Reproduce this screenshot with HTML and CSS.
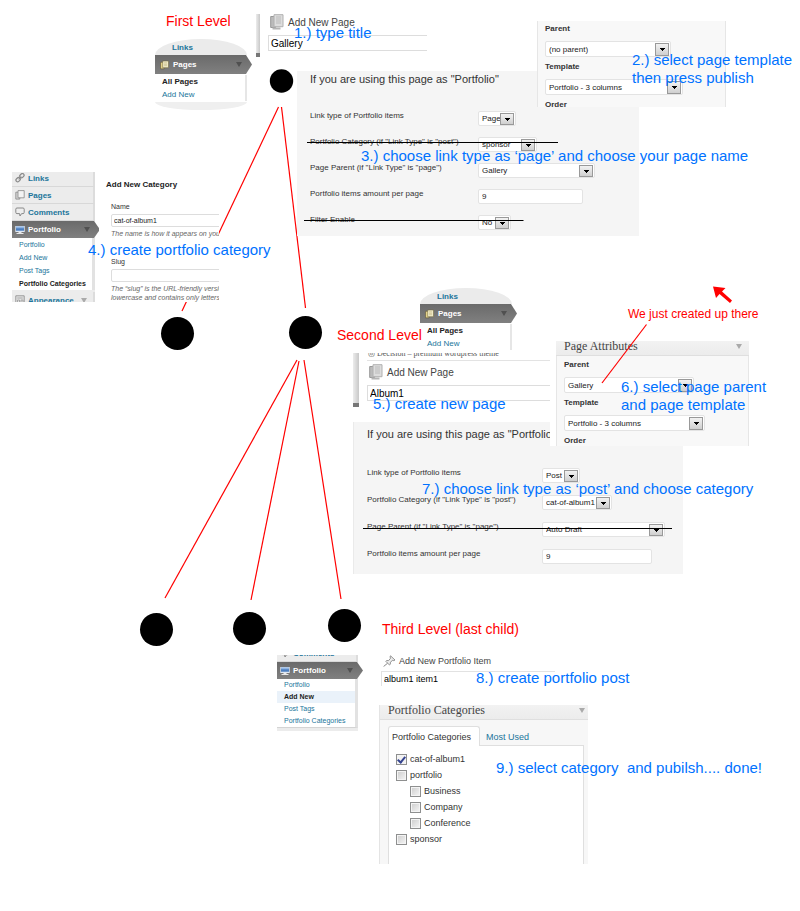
FILE: index.html
```html
<!DOCTYPE html>
<html lang="en">
<head>
<meta charset="utf-8">
<title>Portfolio levels guide</title>
<link rel="stylesheet" href="styles.css">
</head>
<body>
<svg class="defs" width="0" height="0" aria-hidden="true">
  <symbol id="i-link" viewBox="0 0 10 10"><g fill="none" stroke="#8a8a8a" stroke-width="1.2"><rect x="4.6" y="1" width="4.6" height="3.4" rx="1.6" transform="rotate(-45 6.9 2.7)"/><rect x=".8" y="5" width="4.6" height="3.4" rx="1.6" transform="rotate(-45 3.1 6.7)"/><path d="M3.6 6.4 6.4 3.6"/></g></symbol>
  <symbol id="i-pages" viewBox="0 0 10 10"><path d="M.8 2.2h4v6.9h-4z" fill="#d5d5d5" stroke="#888" stroke-width=".8"/><path d="M3 .6h6.2v7.2H3z" fill="#f3f3f3" stroke="#888" stroke-width=".8"/></symbol>
  <symbol id="i-pages-on" viewBox="0 0 10 10"><path d="M.6 2h4v7.3h-4z" fill="#e6d48c" stroke="#554d30" stroke-width=".6"/><path d="M3 .6h6.4v7.4H3z" fill="#f4eecb" stroke="#6d6238" stroke-width=".6"/><path d="M4.5 2.6h3.3M4.5 4.2h3.3M4.5 5.8h3.3" stroke="#b5a770" stroke-width=".6"/></symbol>
  <symbol id="i-comment" viewBox="0 0 10 10"><path d="M2 1h6q1.2 0 1.2 1.2v3.2q0 1.2-1.2 1.2H6.6L5 9 4.6 6.6H2Q.8 6.6.8 5.400V2.200Q.8 1 2 1z" fill="#eee" stroke="#888" stroke-width="1"/></symbol>
  <symbol id="i-screen" viewBox="0 0 10 10"><path d="M.3 1h9.4v6H.3z" fill="#dfe8f3"/><path d="M1 1.700h8v4H1z" fill="#4c7fc0"/><path d="M1 1.700h8v1.600H1z" fill="#8fb4e2"/><path d="M3.500 7h3v1h2v1h-7V8h2z" fill="#e8e8e8"/></symbol>
  <symbol id="i-theme" viewBox="0 0 10 10"><path d="M.8.8h8.400v8.400H.8z" fill="#e4e4e4" stroke="#999"/><path d="M2.300 3h5.400M2.500 5h2v3h-2zM6 5h2v3H6z" fill="none" stroke="#999" stroke-width=".8"/></symbol>
  <symbol id="i-bigpages" viewBox="0 0 14 16"><path d="M.7 2.500h5v11h-5z" fill="#bbb" stroke="#999"/><path d="M2.500 14.500h8" stroke="#b5b5b5" stroke-width="2"/><path d="M4 .7h9v12H4z" fill="#ddd" stroke="#b0b0b0"/><path d="M6 3h5M6 5h5M6 7h5M6 9h5" stroke="#bbb"/></symbol>
  <symbol id="i-pin" viewBox="0 0 13 12"><path d="M7.500.8 12 5 10.800 5.700 9.800 5.200 7.400 7.200 7.300 9.300 6.500 10 2.800 6.300 3.600 5.500 5.600 5.600 7.600 3.200 7 2z" fill="#eee" stroke="#888" stroke-width=".9"/><path d="M4.600 8.200.6 11.500" stroke="#888"/></symbol>
</svg>

<main class="canvas">
  <svg class="layer" aria-hidden="true">
    <g stroke="#f00" stroke-width="1.200">
      <path d="M278.500 107 182 311"/><path d="M281.500 107 305.500 308"/>
      <path d="M297 360 165 598"/><path d="M299 361 251 600"/><path d="M304 360 341 599"/>
    </g>
    <circle cx="281.500" cy="81" r="11.700"/>
    <circle cx="177.500" cy="333.500" r="16.500"/><circle cx="305.500" cy="332.500" r="16.500"/>
    <circle cx="156.500" cy="629.500" r="16.500"/><circle cx="249.500" cy="628.500" r="16.500"/><circle cx="344.500" cy="625.500" r="16.500"/>
  </svg>

  <section class="clip titlebox at-title-1">
    <div class="rail"></div>
    <div class="titlebody">
      <h2 class="pagehead"><svg width="14" height="16"><use href="#i-bigpages"/></svg>Add New Page</h2>
      <input class="titleinput" aria-label="Page title" value="Gallery">
    </div>
  </section>

  <nav class="clip lens at-lens-1">
    <a class="lens-top" href="#">Links</a>
    <a class="bar" href="#"><svg width="9" height="10"><use href="#i-pages-on"/></svg><span>Pages</span><i class="tri"></i></a>
    <div class="lens-sub"><a class="current" href="#">All Pages</a><a href="#">Add New</a><div class="lens-foot"></div></div>
  </nav>

  <section class="clip options at-options-1">
    <h3>If you are using this page as "Portfolio"</h3>
    <div class="fields">
      <label for="a1">Link type of Portfolio items</label><span class="pick w38"><select id="a1"><option>Page</option></select></span>
      <label for="a2">Portfolio Category (if "Link Type" is "post")</label><span class="pick w59"><select id="a2"><option>sponsor</option></select></span>
      <label for="a3">Page Parent (if "Link Type" is "page")</label><span class="pick w117"><select id="a3"><option>Gallery</option></select></span>
      <label for="a4">Portfolio items amount per page</label><input id="a4" class="amount" value="9">
      <label for="a5">Filter Enable</label><span class="pick w33"><select id="a5"><option>No</option></select></span>
    </div>
  </section>

  <section class="clip attrs at-attrs-1">
    <div class="attrs-body">
      <label for="b1">Parent</label><span class="pick tall w126"><select id="b1"><option>(no parent)</option></select></span>
      <label for="b2">Template</label><span class="pick tall w138"><select id="b2"><option>Portfolio - 3 columns</option></select></span>
      <b>Order</b>
    </div>
  </section>

  <nav class="clip menu at-menu-1">
    <a class="item" href="#"><svg width="10" height="10"><use href="#i-link"/></svg><span>Links</span></a>
    <a class="item" href="#"><svg width="10" height="10"><use href="#i-pages"/></svg><span>Pages</span></a>
    <a class="item" href="#"><svg width="10" height="10"><use href="#i-comment"/></svg><span>Comments</span></a>
    <a class="bar" href="#"><svg width="10" height="10"><use href="#i-screen"/></svg><span>Portfolio</span><i class="tri"></i></a>
    <div class="sub"><a href="#">Portfolio</a><a href="#">Add New</a><a href="#">Post Tags</a><a class="current" href="#">Portfolio Categories</a></div>
    <a class="item" href="#"><svg width="10" height="10"><use href="#i-theme"/></svg><span>Appearance</span><i class="tri"></i></a>
  </nav>

  <section class="clip catform at-catform">
    <h3>Add New Category</h3>
    <div class="catfield"><label for="c1">Name</label><input id="c1" value="cat-of-album1"><p>The name is how it appears on your site.</p></div>
    <div class="catfield"><label for="c2">Slug</label><input id="c2"><p>The “slug” is the URL-friendly version<br>lowercase and contains only letters, numbers</p></div>
  </section>

  <section class="clip titlebox second at-title-2">
    <div class="rail"></div>
    <div class="titlebody">
      <p class="sitename"><span>◎</span> Decision – premium wordpress theme</p>
      <h2 class="pagehead"><svg width="14" height="16"><use href="#i-bigpages"/></svg>Add New Page</h2>
      <input class="titleinput" aria-label="Page title" value="Album1">
    </div>
  </section>

  <nav class="clip lens short at-lens-2">
    <a class="lens-top" href="#">Links</a>
    <a class="bar" href="#"><svg width="9" height="10"><use href="#i-pages-on"/></svg><span>Pages</span><i class="tri"></i></a>
    <div class="lens-sub"><a class="current" href="#">All Pages</a><a href="#">Add New</a></div>
  </nav>

  <section class="clip options wide at-options-2">
    <h3>If you are using this page as "Portfolio"</h3>
    <div class="fields">
      <label for="d1">Link type of Portfolio items</label><span class="pick w38"><select id="d1"><option>Post</option></select></span>
      <label for="d2">Portfolio Category (if "Link Type" is "post")</label><span class="pick w70"><select id="d2"><option>cat-of-album1</option></select></span>
      <label for="d3">Page Parent (if "Link Type" is "page")</label><span class="pick w123"><select id="d3"><option>Auto Draft</option></select></span>
      <label for="d4">Portfolio items amount per page</label><input id="d4" class="amount" value="9">
    </div>
  </section>

  <section class="clip attrs gap at-attrs-2">
    <h3 class="boxhead">Page Attributes<i class="tri"></i></h3>
    <div class="attrs-body">
      <label for="e1">Parent</label><span class="pick tall w130"><select id="e1"><option>Gallery</option></select></span>
      <label for="e2">Template</label><span class="pick tall w141"><select id="e2"><option>Portfolio - 3 columns</option></select></span>
      <b>Order</b>
    </div>
  </section>

  <nav class="clip menu tight at-menu-2">
    <a class="item" href="#"><svg width="10" height="10"><use href="#i-comment"/></svg><span>Comments</span></a>
    <a class="bar" href="#"><svg width="10" height="10"><use href="#i-screen"/></svg><span>Portfolio</span><i class="tri"></i></a>
    <div class="sub"><a href="#">Portfolio</a><a class="current lit" href="#">Add New</a><a href="#">Post Tags</a><a href="#">Portfolio Categories</a></div>
  </nav>

  <section class="clip itembox at-item">
    <h2><svg width="13" height="12"><use href="#i-pin"/></svg>Add New Portfolio Item</h2>
    <input aria-label="Item title" value="album1 item1">
  </section>

  <section class="clip catbox at-catbox">
    <h3 class="boxhead">Portfolio Categories<i class="tri"></i></h3>
    <div class="tabs"><button class="tab on">Portfolio Categories</button><button class="tab">Most Used</button></div>
    <div class="checks">
      <label><input type="checkbox" checked>cat-of-album1</label>
      <label><input type="checkbox">portfolio</label>
      <label class="child"><input type="checkbox">Business</label>
      <label class="child"><input type="checkbox">Company</label>
      <label class="child"><input type="checkbox">Conference</label>
      <label><input type="checkbox">sponsor</label>
    </div>
  </section>

  <svg class="layer" aria-hidden="true">
    <path d="M307 142.500H558M304 220.500H523.500M363 528.500H672" stroke="#000"/>
    <path d="M646.500 324.500 602 383" stroke="#f00" stroke-width="1.200"/>
    <path d="M713 286.500 725.500 288 722 291.500 732 300.500 730 303 719.500 294 716 298z" fill="#f00"/>
  </svg>

  <p class="level at-l1">First Level</p>
  <p class="level at-l2">Second Level</p>
  <p class="level at-l3">Third Level (last child)</p>
  <p class="remark at-remark">We just created up there</p>
  <p class="step at-s1">1.) type title</p>
  <p class="step at-s2">2.) select page template<br>then press publish</p>
  <p class="step at-s3">3.) choose link type as ‘page’ and choose your page name</p>
  <p class="step at-s4">4.) create portfolio category</p>
  <p class="step at-s5">5.) create new page</p>
  <p class="step at-s6">6.) select page parent<br>and page template</p>
  <p class="step at-s7">7.) choose link type as ‘post’ and choose category</p>
  <p class="step at-s8">8.) create portfolio post</p>
  <p class="step at-s9">9.) select category  and pubilsh.... done!</p>
</main>
</body>
</html>
```
FILE: styles.css
```css
* { box-sizing: border-box; }
body { margin: 0; background: #fff; color: #333; font-family: "Liberation Sans", Arial, sans-serif; font-size: 8px; }
h2, h3, p { margin: 0; font-weight: normal; }
a { color: #21759b; text-decoration: none; }
input, select, button { margin: 0; font: inherit; color: #222; outline: 0; }
svg { flex: none; display: block; }
.defs { position: absolute; }

/* Free canvas: clippings, nodes and notes are pinned on it */
.canvas { position: relative; min-height: 880px; overflow: hidden; }
.layer { position: absolute; left: 0; top: 0; width: 100%; height: 100%; pointer-events: none; }
.clip, .level, .step, .remark { position: absolute; }

.level { font-size: 14px; line-height: 18px; color: #f00; white-space: nowrap; }
.step { font-size: 15px; line-height: 18px; color: #0072ff; white-space: pre; }
.remark { font-size: 12px; line-height: 16px; color: #f00; white-space: nowrap; }

.at-title-1 { left: 256px; top: 14px; width: 171px; height: 43px; }
.at-lens-1 { left: 155px; top: 39px; }
.at-options-1 { left: 297px; top: 71px; width: 342px; height: 165px; }
.at-attrs-1 { left: 537px; top: 21px; width: 189px; height: 86px; }
.at-menu-1 { left: 12px; top: 172px; height: 130px; }
.at-catform { left: 99px; top: 172px; width: 120px; height: 130px; }
.at-title-2 { left: 353px; top: 353px; width: 197px; height: 54px; }
.at-lens-2 { left: 420px; top: 288px; }
.at-options-2 { left: 353px; top: 422px; width: 330px; height: 152px; }
.at-attrs-2 { left: 550px; top: 341px; width: 199px; height: 105px; }
.at-menu-2 { left: 277px; top: 655px; height: 76px; }
.at-item { left: 381px; top: 654px; width: 174px; }
.at-catbox { left: 379px; top: 705px; width: 209px; height: 159px; }
.at-l1 { left: 166px; top: 12px; }
.at-l2 { left: 337px; top: 326px; }
.at-l3 { left: 382px; top: 620px; }
.at-remark { left: 628px; top: 306px; }
.at-s1 { left: 294px; top: 24px; }
.at-s2 { left: 632px; top: 51px; }
.at-s3 { left: 361px; top: 147px; }
.at-s4 { left: 88px; top: 241px; }
.at-s5 { left: 373px; top: 395px; }
.at-s6 { left: 621px; top: 378px; }
.at-s7 { left: 422px; top: 480px; }
.at-s8 { left: 476px; top: 669px; }
.at-s9 { left: 496px; top: 759px; }

.tri { width: 0; height: 0; margin-left: auto; border: 3px solid transparent; border-top: 5px solid #aaa; border-bottom: 0; }

/* Drop-downs */
.pick { position: relative; display: flex; height: 15px; }
.pick.tall { height: 16px; }
.pick select { appearance: none; width: 100%; padding: 0 3px; border: 1px solid #e3e3e3; border-radius: 2px; background: #fff; font-size: 8px; color: #222; }
.pick::after { content: ""; position: absolute; right: 2px; top: 2px; bottom: 1px; width: 12px; border: 1px solid #999; background: linear-gradient(#000, #000) center 4px / 5px 1px no-repeat, linear-gradient(#000, #000) center 5px / 3px 1px no-repeat, linear-gradient(#000, #000) center 6px / 1px 1px no-repeat, linear-gradient(#f2f2f2, #cfcfcf); }
.w33 { width: 33px; } .w38 { width: 38px; } .w59 { width: 59px; } .w70 { width: 70px; }
.w117 { width: 117px; } .w123 { width: 123px; } .w126 { width: 126px; } .w130 { width: 130px; }
.w138 { width: 138px; } .w141 { width: 141px; }
.amount { width: 105px; height: 15px; padding: 0 3px; border: 1px solid #e3e3e3; border-radius: 2px; background: #fff; }

/* Title clippings */
.titlebox { display: flex; background: #fff; overflow: hidden; }
.rail { width: 4px; margin-right: 8px; background: linear-gradient(90deg, #ececec, #c8c8c8); border-bottom: 4px solid #777; }
.titlebody { flex: 1; display: flex; flex-direction: column; }
.pagehead { display: flex; align-items: center; gap: 4px; height: 16px; padding-left: 2px; font-size: 10px; color: #444; }
.titleinput { width: 100%; height: 16px; margin-top: 5px; padding: 0 2px; border: 1px solid #ddd; border-right: 0; background: #fff; font-size: 10px; color: #000; }
.second .rail { width: 6px; }
.sitename { height: 8px; margin-bottom: 3px; padding-left: 1px; border-bottom: 1px solid #e3e3e3; font: 8px/1px "Liberation Serif", serif; color: #555; white-space: nowrap; }

/* Rounded menu clippings */
.lens { width: 92px; }
.lens-top { display: flex; align-items: center; height: 16px; padding-left: 17px; border-radius: 50% 50% 0 0 / 100% 100% 0 0; background: #ebebeb; overflow: hidden; font-weight: bold; }
.bar { display: flex; align-items: center; gap: 7px; height: 19px; margin-right: -5px; padding: 0 10px 0 5px; background: linear-gradient(#6a6a6a, #808080); clip-path: polygon(0 0, calc(100% - 6px) 0, 100% 50%, calc(100% - 6px) 100%, 0 100%); color: #fff; font-weight: bold; }
.bar .tri { border-top-color: #505050; }
.lens .bar { gap: 4px; }
.lens-sub { display: flex; flex-direction: column; height: 36px; padding-top: 1px; line-height: 13px; }
.lens-sub a { padding-left: 7px; border-right: 2px solid #e6e6e6; }
.lens-foot { flex: 1; margin-top: 1px; border-radius: 0 0 50% 50% / 0 0 100% 100%; background: #efefef; }
.short .lens-sub { height: 30px; }
.current { color: #222; font-weight: bold; }

/* Option panels */
.options { background: #f5f5f5; padding-left: 13px; }
.options h3 { height: 40px; font-size: 11px; line-height: 17px; }
.fields { display: grid; grid-template-columns: 168px 1fr; grid-auto-rows: 15px; row-gap: 11px; }
.fields label { line-height: 10px; white-space: nowrap; }
.wide { border-left: 1px solid #eaeaea; }
.wide h3 { height: 46px; line-height: 25px; }
.wide .fields { grid-template-columns: 175px 1fr; row-gap: 12px; }
.wide .amount { width: 110px; }

/* Page attribute boxes */
.attrs { display: flex; flex-direction: column; overflow: hidden; background: #fff; }
.attrs.gap { padding-left: 6px; }
.attrs-body { flex: 1; display: flex; flex-direction: column; padding: 3px 0 0 7px; background: #f8f8f8; border: solid #e6e6e6; border-width: 0 1px; overflow: hidden; }
.attrs-body label, .attrs-body b { flex: none; line-height: 10px; font-weight: bold; }
.attrs-body .pick { flex: none; margin: 7px 0 5px; }
.boxhead { display: flex; align-items: center; flex: none; height: 15px; padding: 0 3px 4px 8px; border-bottom: 1px solid #dfdfdf; background: linear-gradient(#f2f2f2, #ececec); font: 12px/12px "Liberation Serif", serif; color: #444; }
.gap .attrs-body { padding-top: 4px; }
.gap .boxhead { padding-right: 7px; }

/* Admin menus */
.menu { width: 83px; background: #ececec; font-size: 7px; clip-path: inset(0 -6px 0 0); }
.item { display: flex; align-items: center; gap: 3px; height: 17px; padding: 0 6px 0 3px; border-bottom: 1px solid #d8d8d8; border-right: 2px solid #dcdcdc; font-weight: bold; }
.item span { font-size: 8px; }
.menu .bar { height: 17px; gap: 3px; padding-left: 3px; font-size: 8px; }
.menu > .item:first-child { margin-top: -2px; }
.menu .sub { display: flex; flex-direction: column; margin-bottom: 2px; background: #fff; border-right: 3px solid #e2e2e2; line-height: 13px; }
.sub a { padding-left: 7px; white-space: nowrap; }
.tight.menu { width: 81px; }
.tight.menu > .item:first-child { margin-top: -10px; }
.tight.menu .sub { line-height: 12px; border-bottom: 1px solid #d4d4d4; }
.lit { background: #eaf2fa; }

/* Category form */
.catform { display: flex; flex-direction: column; padding: 7px 0 0 7px; overflow: hidden; background: #fff; white-space: nowrap; }
.catform h3 { line-height: 12px; font-size: 8px; font-weight: bold; color: #222; }
.catfield { display: flex; flex-direction: column; height: 55px; flex: none; padding-left: 5px; font-size: 7px; }
.catform h3 + .catfield { margin-top: 11px; }
.catfield label { line-height: 10px; }
.catfield input { width: 120px; height: 13px; flex: none; margin: 2px 0; padding: 0 2px; border: 1px solid #ddd; border-radius: 2px; background: #fff; }
.catfield p { font-style: italic; line-height: 9px; color: #666; }

/* New item */
.itembox { background: #fff; }
.itembox h2 { display: flex; align-items: center; gap: 3px; height: 13px; padding-left: 2px; font-size: 9px; color: #444; }
.itembox input { width: 100%; height: 15px; margin-top: 4px; padding: 0 2px; border: 1px solid #e2e2e2; border-width: 1px 0 0 1px; background: #fff; font-size: 9px; color: #000; }

/* Category box */
.catbox { display: flex; flex-direction: column; background: #f7f7f7; border-left: 1px solid #e4e4e4; font-size: 9px; }
.tabs { display: flex; height: 20px; margin: 6px 0 -1px 8px; }
.tab { padding: 0 5px; border: 1px solid transparent; border-bottom: 0; background: none; color: #21759b; }
.tab.on { width: 92px; padding: 0 3px; border-color: #dfdfdf; border-radius: 3px 3px 0 0; background: #fff; color: #333; text-align: left; z-index: 1; }
.checks { flex: 1; display: flex; flex-direction: column; margin: 0 4px 0 8px; padding: 5px 7px 0; border: solid #dfdfdf; border-width: 1px 1px 0; background: #fff; }
.checks label { display: flex; align-items: center; gap: 3px; height: 16px; }
.checks .child { padding-left: 14px; }
.checks input { appearance: none; width: 11px; height: 11px; border: 1px solid #8e8f8f; background: linear-gradient(135deg, #ccc, #f6f6f6); box-shadow: inset 0 0 0 1px #f4f4f4; }
.checks input:checked { display: grid; place-items: center; background: #f2f2f2; }
.checks input:checked::before { content: ""; width: 3px; height: 6px; border: solid #35448f; border-width: 0 2px 2px 0; transform: rotate(40deg); }
```
